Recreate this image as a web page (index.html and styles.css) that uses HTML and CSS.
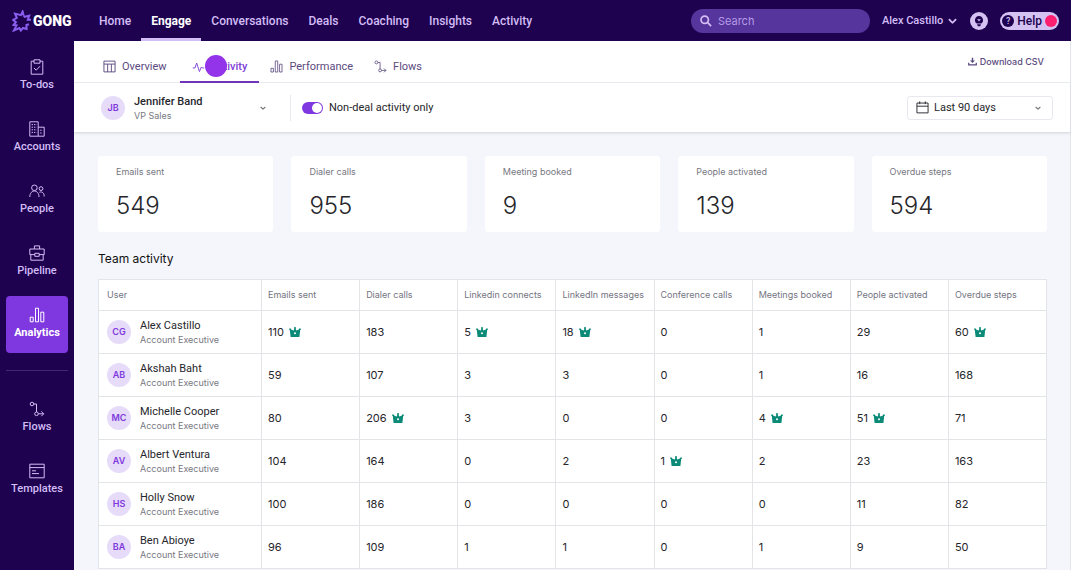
FILE: index.html
```
<!DOCTYPE html>
<html lang="en">
<head>
<meta charset="utf-8">
<title>Gong Engage – Analytics</title>
<meta name="viewport" content="width=device-width, initial-scale=1">
<link rel="stylesheet" href="styles.css">
</head>
<body>
<svg class="sprite" aria-hidden="true">
  <symbol id="i-bars" viewBox="0 0 16 16"><path d="M1.2 10.2h3v4.6h-3zM6.5 1.2h3v13.6h-3zM11.8 5.2h3v9.6h-3z"/></symbol>
  <symbol id="i-flow" viewBox="0 0 16 16"><circle cx="3" cy="3" r="1.8"/><path d="M4.8 3h2.7v8"/><circle cx="7.5" cy="12.8" r="1.8"/><path d="M9.3 12.8h5.4M12.3 10.4l2.4 2.4-2.4 2.4"/></symbol>
  <symbol id="i-chevron" viewBox="0 0 10 6"><path d="M1 1l4 4 4-4"/></symbol>
  <symbol id="i-crown" viewBox="0 0 12 12"><path fill="currentColor" stroke="none" d="M.2 2.4h1.6l.6 1.4 2.4.6.5-1.7a1 1 0 1 1 1.4 0l.5 1.700 2.400-.6.6-1.400h1.600v1.700h-.6L10.400 11H1.600L.8 4.100H.2z"/><circle cx="6" cy="7.3" r="1" fill="#fff" stroke="none"/></symbol>
</svg>

<header class="topbar">
  <a class="logo" href="#" aria-label="Gong">
    <svg class="logo-mark" viewBox="0 0 20 22"><path d="M11.5 5.3L10.6 1.5 8.9 5.1 3 3.6l1.8 4.2L1.2 9.9l2.7 2.3L1.5 15l3 .4L2 20.4l5.4-2.3 1.5 2.4 2-2.5 3.7 1-.2-4 2.6-.8M19 9.8h-3.2l1.4-4.2-4.4 1.2-1.3-1.5"/></svg>
    <span class="logo-text">GONG</span>
  </a>
  <nav class="mainnav" aria-label="Main">
    <a href="#">Home</a>
    <a href="#" class="is-active">Engage</a>
    <a href="#">Conversations</a>
    <a href="#">Deals</a>
    <a href="#">Coaching</a>
    <a href="#">Insights</a>
    <a href="#">Activity</a>
  </nav>
  <label class="search">
    <svg class="search-icon" viewBox="0 0 14 14"><circle cx="5.5" cy="5.5" r="4.3"/><path d="M8.7 8.7l4.3 4.3"/></svg>
    <input type="search" placeholder="Search" aria-label="Search">
  </label>
  <button class="account" type="button">Alex Castillo <svg class="chev" viewBox="0 0 10 6"><use href="#i-chevron"/></svg></button>
  <button class="tips" type="button" aria-label="Tips"><svg viewBox="0 0 18 18"><path fill="#1e0250" d="M9 4a4.1 4.1 0 0 0-2.2 7.5h4.4A4.1 4.1 0 0 0 9 4zM7 12.2h4l-.8 2H7.8z"/><path d="M7.2 7.2h3.6L9 9.6z" fill="#d3c2f2"/></svg></button>
  <button class="help" type="button"><span class="help-q">?</span>Help<span class="help-dot"></span></button>
</header>

<div class="shell">
  <nav class="sidebar" aria-label="Engage">
    <a href="#"><svg viewBox="0 0 16 16"><path d="M5 2.2H2.2v13h11.6v-13H11M5 .8h6v3.4H5zM5 9l2.2 2.2L11 7.2"/></svg>To-dos</a>
    <a href="#"><svg viewBox="0 0 16 16"><path d="M.8.8h8.4v14.4H.8zM9.2 6.2h6v9h-6"/><path stroke-dasharray="1.4 1" d="M2.6 3.6h5M2.6 6.2h5M2.6 8.8h5M2.6 11.4h5M11.2 9.2h2.4M11.2 12h2.4"/></svg>Accounts</a>
    <a href="#"><svg viewBox="0 0 16 16"><circle cx="5.4" cy="4.8" r="2.8"/><path d="M.8 14c0-8 9.2-8 9.2 0"/><circle cx="12" cy="5.6" r="1.9"/><path d="M10.4 9.3c2.6-1.2 4.8.6 4.8 4.2"/></svg>People</a>
    <a href="#"><svg viewBox="0 0 16 16"><path d="M.8 4h14.4v5.6H.8zM1.8 9.6v5.6h12.4V9.6M5.4 4V.9h5.2V4"/><path class="cut" d="M5.8 8.3h4.4v3H5.8z"/></svg>Pipeline</a>
    <a href="#" class="is-active" aria-current="page"><svg viewBox="0 0 16 16"><use href="#i-bars"/></svg>Analytics</a>
    <hr>
    <a href="#"><svg viewBox="0 0 16 16"><use href="#i-flow"/></svg>Flows</a>
    <a href="#"><svg viewBox="0 0 16 16"><path d="M.8 1.2h14.4v13.6H.8zM.8 4.6h14.4M3 7.8h4M3 10.6h7"/></svg>Templates</a>
  </nav>

  <main class="content">
    <div class="tabs">
      <a href="#"><svg viewBox="0 0 14 14"><path d="M1 1.2h12v11.6H1zM1 4.4h12M5 4.4v8.4M9 4.4v8.4"/></svg>Overview</a>
      <a href="#" class="is-active" aria-current="page"><svg viewBox="0 0 14 14"><path d="M.8 7.5h2.4L5 2.2l3 9.2 2.1-5 1 1.1h2.1"/></svg>Activity<span class="pointer"></span></a>
      <a href="#"><svg viewBox="0 0 16 16"><use href="#i-bars"/></svg>Performance</a>
      <a href="#"><svg viewBox="0 0 16 16"><use href="#i-flow"/></svg>Flows</a>
      <button class="download" type="button"><svg viewBox="0 0 10 10"><path fill="currentColor" stroke="none" d="M4.2.8h1.6v3h2L5 6.8l-2.8-3h2z"/><path d="M.8 6.4v2.4h8.4V6.4"/></svg>Download CSV</button>
    </div>

    <div class="filters">
      <button class="person" type="button">
        <span class="avatar">JB</span>
        <span class="who"><strong>Jennifer Band</strong><small>VP Sales</small></span>
        <svg class="chev" viewBox="0 0 10 6"><use href="#i-chevron"/></svg>
      </button>
      <label class="toggle"><input type="checkbox" role="switch" checked>Non-deal activity only</label>
      <label class="range">
        <svg viewBox="0 0 14 14"><path d="M1 2.2h12v10.6H1zM1 5.6h12M4 .4v3M10 .4v3"/></svg>
        <select aria-label="Date range"><option>Last 90 days</option></select>
        <svg class="chev" viewBox="0 0 10 6"><use href="#i-chevron"/></svg>
      </label>
    </div>

    <div class="report">
      <section class="cards" aria-label="Totals">
        <article><h3>Emails sent</h3><p>549</p></article>
        <article><h3>Dialer calls</h3><p>955</p></article>
        <article><h3>Meeting booked</h3><p>9</p></article>
        <article><h3>People activated</h3><p>139</p></article>
        <article><h3>Overdue steps</h3><p>594</p></article>
      </section>

      <h2>Team activity</h2>
      <table class="team">
        <thead>
          <tr><th class="col-user">User</th><th>Emails sent</th><th>Dialer calls</th><th>Linkedin connects</th><th>LinkedIn messages</th><th>Conference calls</th><th>Meetings booked</th><th>People activated</th><th>Overdue steps</th></tr>
        </thead>
        <tbody>
          <tr><td><div class="user"><span class="avatar">CG</span><span class="who">Alex Castillo<small>Account Executive</small></span></div></td><td>110<svg class="crown"><use href="#i-crown"/></svg></td><td>183</td><td>5<svg class="crown"><use href="#i-crown"/></svg></td><td>18<svg class="crown"><use href="#i-crown"/></svg></td><td>0</td><td>1</td><td>29</td><td>60<svg class="crown"><use href="#i-crown"/></svg></td></tr>
          <tr><td><div class="user"><span class="avatar">AB</span><span class="who">Akshah Baht<small>Account Executive</small></span></div></td><td>59</td><td>107</td><td>3</td><td>3</td><td>0</td><td>1</td><td>16</td><td>168</td></tr>
          <tr><td><div class="user"><span class="avatar">MC</span><span class="who">Michelle Cooper<small>Account Executive</small></span></div></td><td>80</td><td>206<svg class="crown"><use href="#i-crown"/></svg></td><td>3</td><td>0</td><td>0</td><td>4<svg class="crown"><use href="#i-crown"/></svg></td><td>51<svg class="crown"><use href="#i-crown"/></svg></td><td>71</td></tr>
          <tr><td><div class="user"><span class="avatar">AV</span><span class="who">Albert Ventura<small>Account Executive</small></span></div></td><td>104</td><td>164</td><td>0</td><td>2</td><td>1<svg class="crown"><use href="#i-crown"/></svg></td><td>2</td><td>23</td><td>163</td></tr>
          <tr><td><div class="user"><span class="avatar">HS</span><span class="who">Holly Snow<small>Account Executive</small></span></div></td><td>100</td><td>186</td><td>0</td><td>0</td><td>0</td><td>0</td><td>11</td><td>82</td></tr>
          <tr><td><div class="user"><span class="avatar">BA</span><span class="who">Ben Abioye<small>Account Executive</small></span></div></td><td>96</td><td>109</td><td>1</td><td>1</td><td>0</td><td>1</td><td>9</td><td>50</td></tr>
        </tbody>
      </table>
    </div>
  </main>
</div>
</body>
</html>
```

FILE: styles.css
```
* { box-sizing: border-box; }

body {
  margin: 0;
  height: 100vh;
  display: flex;
  flex-direction: column;
  overflow: hidden;
  font: 11px/14px Roboto, "Liberation Sans", sans-serif;
  color: #26262b;
  background: #f4f6fb;
}

a { color: inherit; text-decoration: none; }
button, input, select { font: inherit; color: inherit; border: 0; background: none; padding: 0; margin: 0; }
h2, h3, p { margin: 0; font-weight: 400; }
svg { fill: none; stroke: currentColor; flex: none; }
.sprite { display: none; }
.chev { width: 6px; height: 4px; stroke-width: 2; }

/* Top bar */
.topbar {
  display: flex;
  align-items: center;
  flex: none;
  height: 41px;
  padding: 0 12px;
  background: #1e0250;
  color: #d3bdf5;
}
.logo { display: flex; align-items: center; gap: 1px; width: 77px; }
.logo-mark { width: 20px; height: 22px; color: #8a5ff0; stroke-width: 2; }
.logo-text { color: #fff; font: 900 14px/20px Roboto, sans-serif; }
.mainnav { display: flex; align-self: stretch; font-size: 12px; font-weight: 500; }
.mainnav a { display: flex; align-items: center; padding: 0 10px; border-bottom: 3px solid transparent; border-top: 3px solid transparent; }
.mainnav .is-active { color: #fff; font-weight: 700; border-bottom-color: #d3bdf5; }
.search {
  display: flex;
  align-items: center;
  gap: 6px;
  width: 179px;
  height: 24px;
  margin-left: auto;
  padding: 0 9px;
  border-radius: 12px;
  background: #56359c;
  font-family: Inter, "Liberation Sans", sans-serif;
}
.search-icon { width: 12px; height: 12px; stroke-width: 2; }
.search input { width: 100%; min-width: 0; outline: 0; }
.search input::placeholder { color: #b79be8; opacity: 1; }
.account { display: flex; align-items: center; gap: 5px; margin-left: 12px; font-weight: 500; white-space: nowrap; }
.account .chev { width: 9px; height: 6px; }
.tips { width: 18px; height: 18px; margin-left: 13px; border-radius: 50%; background: #d3c2f2; }
.tips svg { display: block; stroke: none; }
.help {
  display: flex;
  align-items: center;
  gap: 3px;
  height: 18px;
  margin-left: 12px;
  padding: 0 2px;
  border-radius: 9px;
  background: #d3c2f2;
  color: #1e0250;
  font-size: 12px;
  font-weight: 500;
}
.help-q { width: 12px; height: 12px; border-radius: 50%; background: #1e0250; color: #d3c2f2; font-size: 9px; line-height: 12px; }
.help-dot { width: 12px; height: 12px; border-radius: 50%; background: #ff1f70; }

/* Sidebar */
.shell { display: flex; flex: 1; min-height: 0; }
.sidebar {
  display: flex;
  flex-direction: column;
  gap: 5px;
  flex: none;
  width: 74px;
  padding: 7px 6px;
  background: #1e0250;
  color: #d3bdf5;
  font-weight: 500;
}
.sidebar a { display: flex; flex-direction: column; align-items: center; gap: 3px; height: 57px; padding-top: 11px; border-radius: 4px; }
.sidebar svg { width: 16px; height: 16px; }
.sidebar .cut { fill: #1e0250; }
.sidebar .is-active { background: #7f38df; color: #fff; font-weight: 700; }
.sidebar hr { align-self: stretch; margin: 12px 0 14px; border: 0; border-top: 1px solid #43287a; }

/* Tabs */
.content { flex: 1; min-width: 0; border-right: 1px solid #e3e5ec; }
.tabs { display: flex; height: 42px; padding: 0 26px 0 21px; background: #fff; border-bottom: 1px solid #eaeaf1; color: #5b4a80; }
.tabs a { position: relative; display: flex; align-items: center; gap: 6px; padding: 12px 8px 0; margin: 0 5px 0 0; border-bottom: 2px solid transparent; }
.tabs a svg { width: 13px; height: 13px; }
.tabs .is-active { padding: 12px 12px 0; margin: 0 3px -1px 0; border-bottom-color: #6f35b8; color: #8040d8; font-weight: 500; }
.pointer { position: absolute; left: 25px; top: 14px; width: 22px; height: 22px; border-radius: 50%; background: #9333ea; }
.download { display: flex; align-items: center; gap: 3px; margin-left: auto; font-family: Inter, sans-serif; font-size: 9px; font-weight: 500; }
.download svg { width: 9px; height: 9px; stroke-width: 1.4; }

/* Filters */
.filters {
  display: flex;
  align-items: center;
  height: 50px;
  padding: 0 17px 0 27px;
  background: #fff;
  border-bottom: 1px solid #dcdfe3;
  box-shadow: 0 1px 2px #00000014;
}
.avatar {
  flex: none;
  width: 24px;
  height: 24px;
  border-radius: 50%;
  background: #e6dcfa;
  color: #8038dc;
  font-family: Inter, sans-serif;
  font-size: 9px;
  font-weight: 600;
  line-height: 24px;
  text-align: center;
}
.who { padding-top: 2px; text-align: left; white-space: nowrap; font-family: Roboto, sans-serif; }
.who strong { display: block; font-weight: 500; }
.who small { display: block; font-family: Inter, sans-serif; font-size: 9px; line-height: 14px; color: #77777f; }
.person { display: flex; align-items: center; gap: 9px; width: 190px; padding-right: 24px; height: 26px; border-right: 1px solid #e8e8ee; }
.person .chev { margin-left: auto; color: #777; }
.toggle { display: flex; align-items: center; gap: 6px; margin-left: 11px; }
.toggle input {
  appearance: none;
  display: flex;
  align-items: center;
  justify-content: flex-end;
  width: 21px;
  height: 12px;
  padding: 1px;
  border-radius: 6px;
  background: #7f38df;
}
.toggle input::before { content: ""; width: 10px; height: 10px; border-radius: 50%; background: #fff; }
.range { display: flex; align-items: center; gap: 5px; width: 146px; height: 24px; margin-left: auto; padding: 0 11px 0 8px; border: 1px solid #e8e8ee; border-radius: 3px; }
.range svg { width: 13px; height: 13px; }
.range .chev { width: 6px; height: 4px; color: #777; }
.range select { appearance: none; flex: 1; min-width: 0; }

/* Report */
.report { padding: 23px 23px 0 24px; font-family: Inter, "Liberation Sans", sans-serif; }
.cards { display: grid; grid-template-columns: repeat(5, 1fr); gap: 18px; }
.cards article { padding: 9px 18px 11px; border-radius: 3px; background: #fff; }
.cards h3 { font-size: 9px; line-height: 14px; color: #77777f; }
.cards p { margin-top: 12px; font-size: 24px; font-weight: 300; line-height: 30px; }
.report h2 { margin: 18px 0 12px; font-size: 12px; line-height: 17px; color: #111; }

.team { width: 100%; table-layout: fixed; border-collapse: collapse; background: #fff; }
.team th, .team td { padding: 0 0 0 6px; border: 1px solid #e3e4e8; text-align: left; white-space: nowrap; }
.team th { height: 31px; font-size: 9px; font-weight: 400; color: #74747f; }
.team .col-user { width: 163px; }
.team td { height: 43px; }
.team th:first-child, .team td:first-child { padding-left: 8px; }
.user { display: flex; align-items: center; gap: 9px; }
.crown { width: 12px; height: 12px; margin-left: 5px; vertical-align: -2px; color: #0b8a78; }
```
